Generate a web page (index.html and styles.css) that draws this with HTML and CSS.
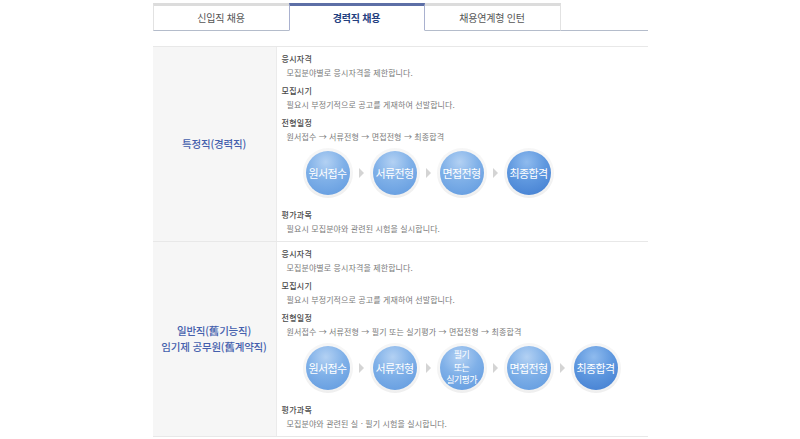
FILE: index.html
```html
<!DOCTYPE html>
<html lang="ko">
<head>
<meta charset="utf-8">
<link rel="stylesheet" href="styles.css">
</head>
<body>
<div class="wrap">
  <ul class="tabs">
    <li class="tab">신입직 채용</li>
    <li class="tab active">경력직 채용</li>
    <li class="tab">채용연계형 인턴</li>
  </ul>
  <div class="table">
    <div class="row">
      <div class="head"><p>특정직(경력직)</p></div>
      <div class="cell">
        <div class="block"><h4>응시자격</h4><p>모집분야별로 응시자격을 제한합니다.</p></div>
        <div class="block"><h4>모집시기</h4><p>필요시 부정기적으로 공고를 게재하여 선발합니다.</p></div>
        <div class="block"><h4>전형일정</h4><p>원서접수 → 서류전형 → 면접전형 → 최종합격</p></div>
        <div class="steps">
          <div class="step"><span>원서접수</span></div><i class="arr"></i>
          <div class="step"><span>서류전형</span></div><i class="arr"></i>
          <div class="step"><span>면접전형</span></div><i class="arr"></i>
          <div class="step last"><span>최종합격</span></div>
        </div>
        <div class="block"><h4>평가과목</h4><p>필요시 모집분야와 관련된 시험을 실시합니다.</p></div>
      </div>
    </div>
    <div class="row">
      <div class="head"><p>일반직(舊기능직)<br>임기제 공무원(舊계약직)</p></div>
      <div class="cell">
        <div class="block"><h4>응시자격</h4><p>모집분야별로 응시자격을 제한합니다.</p></div>
        <div class="block"><h4>모집시기</h4><p>필요시 부정기적으로 공고를 게재하여 선발합니다.</p></div>
        <div class="block"><h4>전형일정</h4><p>원서접수 → 서류전형 → 필기 또는 실기평가 → 면접전형 → 최종합격</p></div>
        <div class="steps">
          <div class="step"><span>원서접수</span></div><i class="arr"></i>
          <div class="step"><span>서류전형</span></div><i class="arr"></i>
          <div class="step"><span class="multi">필기<br>또는<br>실기평가</span></div><i class="arr"></i>
          <div class="step"><span>면접전형</span></div><i class="arr"></i>
          <div class="step last"><span>최종합격</span></div>
        </div>
        <div class="block"><h4>평가과목</h4><p>모집분야와 관련된 실 · 필기 시험을 실시합니다.</p></div>
      </div>
    </div>
  </div>
</div>
</body>
</html>
```
FILE: styles.css
```css
* { box-sizing: border-box; }
html, body { margin: 0; padding: 0; background: #fff; }
body { font-family: "Noto Sans CJK KR", "Noto Sans", sans-serif; }
.wrap { width: 495px; margin: 0 auto; padding-top: 3px; }
.tabs {
  list-style: none; margin: 0; padding: 0;
  display: flex; height: 28px;
  border-bottom: 1px solid #b4bccb;
}
.tab {
  width: 136px; height: 28px;
  border-top: 3px solid #dcdcdc;
  border-left: 1px solid #e2e2e2;
  border-bottom: 1px solid #b4bccb;
  display: flex; align-items: center; justify-content: center;
  font-size: 10px; color: #555;
  letter-spacing: -0.2px;
  padding-bottom: 1px;
}
.tab:nth-child(3) { border-right: 1px solid #e2e2e2; }
.tab.active {
  border-top-color: #5d6fa6;
  border-left: 1px solid #a9b1cf;
  border-right: 1px solid #a9b1cf;
  border-bottom: 1px solid #fff;
  color: #24407f; font-weight: 700;
}
.tab.active + .tab { border-left: none; }
.table { margin-top: 15px; border-top: 1px solid #e8e8e8; }
.row { display: flex; border-bottom: 1px solid #e8e8e8; }
.head {
  width: 124px; flex: none;
  background: #f6f6f6;
  border-right: 1px solid #ebebeb;
  display: flex; align-items: center; justify-content: center;
}
.head p {
  margin: 0; text-align: center;
  font-size: 10.5px; line-height: 16px; color: #4460ad;
  font-weight: 500; letter-spacing: -0.2px;
}
.cell { flex: 1; padding: 5px 0 5px 5px; }
.block { margin-bottom: 4px; }
.block:last-child { margin-bottom: 0; }
.block h4 {
  margin: 0; font-size: 8px; line-height: 14px;
  color: #4a4a4a; font-weight: 500; letter-spacing: 0.3px;
}
.block p {
  margin: 0; padding-left: 5px;
  font-size: 8px; line-height: 14px; color: #7a7a7a;
  letter-spacing: 0.1px;
}
.steps {
  display: flex; align-items: center;
  margin: 1px 0 10px 21px;
}
.step {
  width: 50px; height: 50px; border-radius: 50%;
  background: radial-gradient(circle at 50% 40%, #f6f6f6 60%, #e2e2e2 100%);
  display: flex; align-items: center; justify-content: center;
  flex: none;
}
.step span {
  width: 44px; height: 44px; border-radius: 50%;
  background: radial-gradient(circle at 45% 25%, #b3d1f3 0%, #7fb0e8 45%, #5e98de 100%);
  color: #fff; font-size: 11px; font-weight: 400;
  letter-spacing: -0.6px;
  display: flex; align-items: center; justify-content: center;
  text-align: center; line-height: 12px;
}
.step.last span {
  background: radial-gradient(circle at 45% 25%, #8fbbee 0%, #5f98df 45%, #3f7bcf 100%);
}
.step span.multi { font-size: 9px; line-height: 12.5px; }
.arr {
  width: 0; height: 0; flex: none;
  margin: 0 6px;
  border-top: 5px solid transparent;
  border-bottom: 5px solid transparent;
  border-left: 5px solid #d4d4d4;
}
```
